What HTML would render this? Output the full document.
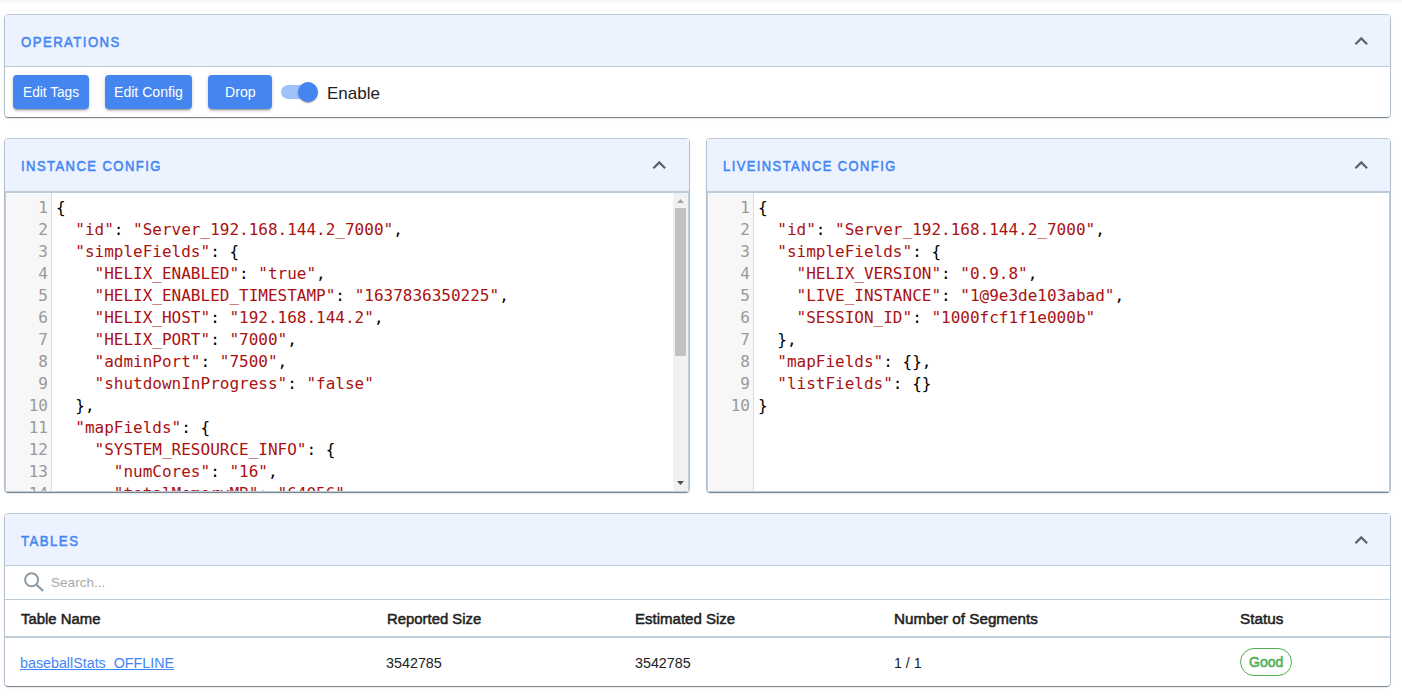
<!DOCTYPE html>
<html lang="en">
<head>
<meta charset="utf-8">
<title>Instance Details</title>
<style>
*{box-sizing:border-box;margin:0;padding:0}
html,body{width:1402px;height:698px;overflow:hidden;background:#fff}
body{position:relative;font-family:"Liberation Sans",sans-serif;color:#212121;font-size:15.5px}
.topshade{position:absolute;left:0;top:0;width:1402px;height:1px;background:#f5f5f5;box-shadow:0 1px 0 #f8f8f8,0 2px 0 #fcfcfc}
.card{position:absolute;border:1px solid #bdccd9;border-radius:4px;background:#fff}
.paper{position:relative;width:100%;height:100%;border-radius:3px;background:#fff;
  box-shadow:0 2px 1px -1px rgba(0,0,0,.2),0 1px 1px 0 rgba(0,0,0,.14),0 1px 3px 0 rgba(0,0,0,.12)}
.hdr{position:relative;background:#ecf3fe;border-bottom:1px solid #bdccd9;height:52px;border-radius:3px 3px 0 0}
.sx{position:absolute;display:inline-block;white-space:nowrap;transform-origin:0 50%;line-height:20px;font-size:15.5px}
.semi{font-weight:400;-webkit-text-stroke:.55px currentColor}
.title{letter-spacing:1.7px;color:#4285f4}
.chev{position:absolute;top:12.9px;width:26.5px;height:26.5px;fill:rgba(0,0,0,.6)}

/* operations */
.ops{position:relative;height:50px}
.btn{position:absolute;top:8px;height:34px;border:0;border-radius:4px;background:#4585ef;color:#fff;
  font:400 15.5px/20px "Liberation Sans",sans-serif;text-align:left;
  box-shadow:0 3px 1px -2px rgba(0,0,0,.2),0 2px 2px 0 rgba(0,0,0,.14),0 1px 5px 0 rgba(0,0,0,.12)}
.switch{position:absolute;left:264px;top:6px;width:58px;height:38px}
.track{position:absolute;left:12px;top:12px;width:34px;height:14px;border-radius:7px;background:#4285f4;opacity:.5}
.thumb{position:absolute;left:29px;top:9px;width:20px;height:20px;border-radius:50%;background:#4585ef;
  box-shadow:0 2px 1px -1px rgba(0,0,0,.2),0 1px 1px 0 rgba(0,0,0,.14),0 1px 3px 0 rgba(0,0,0,.12)}
.ops .swlabel{font-size:17px;color:#212121}

/* code */
.cm{position:relative;height:300px;border:1px solid #bdccd9;background:#fff;overflow:hidden;
  font:16px/22px "DejaVu Sans Mono",monospace;color:#000}
.gutter{position:absolute;left:0;top:0;bottom:0;width:46px;background:#f7f7f7;border-right:1px solid #ddd}
.lines{position:absolute;left:0;top:4px;right:0}
.ln{height:22px;white-space:pre;position:relative;padding-left:50px}
.ln i{position:absolute;left:0;top:0;width:42px;text-align:right;font-style:normal;color:#999}
.s{color:#a11}
.sb{position:absolute;right:0;top:0;bottom:0;width:15px;background:#f1f1f1}
.sb .th{position:absolute;left:2px;width:11px;top:15px;height:148px;background:#c1c1c1}
.sb svg{position:absolute;left:0;width:15px;height:15px}

/* tables */
.search{position:relative;height:34px;border-bottom:1px solid #bdccd9}
.search svg{position:absolute;left:18px;top:4.1px;width:24px;height:24px}
.search .ph{font-size:13.5px;color:#a9a9a9}
.thead{position:relative;height:38px;border-bottom:2px solid #bdccd9}
.thead .sx{color:#1f1f1f}
.trow{position:relative;height:48px}
.trow .sx{color:#212121}
.trow a.sx{color:#4285f4;text-decoration:underline}
.chip{position:absolute;left:1235px;top:10px;width:52px;height:28px;border:1px solid #4caf50;border-radius:14px}
.trow .chip .sx{color:#4caf50;font-size:15px}
</style>
</head>
<body>
<div class="topshade"></div>

<!-- OPERATIONS -->
<div class="card" style="left:4px;top:14px;width:1387px;height:104px"><div class="paper">
  <div class="hdr">
    <span class="sx semi title" style="left:16.34px;top:17px;transform:scaleX(0.8494)">OPERATIONS</span>
    <svg class="chev" style="left:1342.65px" viewBox="0 0 24 24"><path d="M12 8l-6 6 1.41 1.41L12 10.83l4.59 4.58L18 14z"/></svg>
  </div>
  <div class="ops">
    <button class="btn" style="left:8px;width:76px"><span class="sx" style="left:9.70px;top:7px;transform:scaleX(0.8836)">Edit Tags</span></button>
    <button class="btn" style="left:100px;width:87px"><span class="sx" style="left:9.13px;top:7px;transform:scaleX(0.9084)">Edit Config</span></button>
    <button class="btn" style="left:203px;width:64px"><span class="sx" style="left:16.60px;top:7px;transform:scaleX(0.9143)">Drop</span></button>
    <span class="switch" role="switch" aria-checked="true"><span class="track"></span><span class="thumb"></span></span>
    <span class="sx swlabel" style="left:322.29px;top:17px;transform:scaleX(0.9998)">Enable</span>
  </div>
</div></div>

<!-- INSTANCE CONFIG -->
<div class="card" style="left:4px;top:138px;width:686px;height:355px"><div class="paper">
  <div class="hdr" style="height:53px">
    <span class="sx semi title" style="left:15.62px;top:17px;transform:scaleX(0.8417)">INSTANCE CONFIG</span>
    <svg class="chev" style="left:640.7px" viewBox="0 0 24 24"><path d="M12 8l-6 6 1.41 1.41L12 10.83l4.59 4.58L18 14z"/></svg>
  </div>
  <div class="cm">
    <div class="gutter"></div>
    <div class="lines">
<div class="ln"><i>1</i>{</div>
<div class="ln"><i>2</i>  <span class="s">"id"</span>: <span class="s">"Server_192.168.144.2_7000"</span>,</div>
<div class="ln"><i>3</i>  <span class="s">"simpleFields"</span>: {</div>
<div class="ln"><i>4</i>    <span class="s">"HELIX_ENABLED"</span>: <span class="s">"true"</span>,</div>
<div class="ln"><i>5</i>    <span class="s">"HELIX_ENABLED_TIMESTAMP"</span>: <span class="s">"1637836350225"</span>,</div>
<div class="ln"><i>6</i>    <span class="s">"HELIX_HOST"</span>: <span class="s">"192.168.144.2"</span>,</div>
<div class="ln"><i>7</i>    <span class="s">"HELIX_PORT"</span>: <span class="s">"7000"</span>,</div>
<div class="ln"><i>8</i>    <span class="s">"adminPort"</span>: <span class="s">"7500"</span>,</div>
<div class="ln"><i>9</i>    <span class="s">"shutdownInProgress"</span>: <span class="s">"false"</span></div>
<div class="ln"><i>10</i>  },</div>
<div class="ln"><i>11</i>  <span class="s">"mapFields"</span>: {</div>
<div class="ln"><i>12</i>    <span class="s">"SYSTEM_RESOURCE_INFO"</span>: {</div>
<div class="ln"><i>13</i>      <span class="s">"numCores"</span>: <span class="s">"16"</span>,</div>
<div class="ln"><i>14</i>      <span class="s">"totalMemoryMB"</span>: <span class="s">"64056"</span>,</div>
    </div>
    <div class="sb">
      <svg style="top:0" viewBox="0 0 15 15"><path d="M4 10h7L7.5 6z" fill="#a3a3a3"/></svg>
      <div class="th"></div>
      <svg style="bottom:0" viewBox="0 0 15 15"><path d="M4 5h7L7.5 9z" fill="#505050"/></svg>
    </div>
  </div>
</div></div>

<!-- LIVEINSTANCE CONFIG -->
<div class="card" style="left:706px;top:138px;width:685px;height:355px"><div class="paper">
  <div class="hdr" style="height:53px">
    <span class="sx semi title" style="left:15.61px;top:17px;transform:scaleX(0.8362)">LIVEINSTANCE CONFIG</span>
    <svg class="chev" style="left:640.7px" viewBox="0 0 24 24"><path d="M12 8l-6 6 1.41 1.41L12 10.83l4.59 4.58L18 14z"/></svg>
  </div>
  <div class="cm">
    <div class="gutter"></div>
    <div class="lines">
<div class="ln"><i>1</i>{</div>
<div class="ln"><i>2</i>  <span class="s">"id"</span>: <span class="s">"Server_192.168.144.2_7000"</span>,</div>
<div class="ln"><i>3</i>  <span class="s">"simpleFields"</span>: {</div>
<div class="ln"><i>4</i>    <span class="s">"HELIX_VERSION"</span>: <span class="s">"0.9.8"</span>,</div>
<div class="ln"><i>5</i>    <span class="s">"LIVE_INSTANCE"</span>: <span class="s">"1@9e3de103abad"</span>,</div>
<div class="ln"><i>6</i>    <span class="s">"SESSION_ID"</span>: <span class="s">"1000fcf1f1e000b"</span></div>
<div class="ln"><i>7</i>  },</div>
<div class="ln"><i>8</i>  <span class="s">"mapFields"</span>: {},</div>
<div class="ln"><i>9</i>  <span class="s">"listFields"</span>: {}</div>
<div class="ln"><i>10</i>}</div>
    </div>
  </div>
</div></div>

<!-- TABLES -->
<div class="card" style="left:4px;top:513px;width:1387px;height:174px"><div class="paper">
  <div class="hdr">
    <span class="sx semi title" style="left:15.69px;top:17px;transform:scaleX(0.8525)">TABLES</span>
    <svg class="chev" style="left:1342.65px" viewBox="0 0 24 24"><path d="M12 8l-6 6 1.41 1.41L12 10.83l4.59 4.58L18 14z"/></svg>
  </div>
  <div class="search">
    <svg viewBox="0 0 24 24"><circle cx="8.6" cy="9.8" r="6.5" fill="none" stroke="#8d9ba8" stroke-width="2"/><path d="M13.3 14.5l6.9 6.5" stroke="#8d9ba8" stroke-width="2.4" fill="none"/></svg>
    <span class="sx ph" style="left:46.01px;top:7px;transform:scaleX(1.0064)">Search...</span>
  </div>
  <div role="table" aria-label="Tables">
  <div class="thead" role="row">
    <span role="columnheader" class="sx semi" style="left:16.37px;top:9px;transform:scaleX(0.9601)">Table Name</span>
    <span role="columnheader" class="sx semi" style="left:381.55px;top:9px;transform:scaleX(0.9593)">Reported Size</span>
    <span role="columnheader" class="sx semi" style="left:629.82px;top:9px;transform:scaleX(0.9694)">Estimated Size</span>
    <span role="columnheader" class="sx semi" style="left:889.48px;top:9px;transform:scaleX(0.9820)">Number of Segments</span>
    <span role="columnheader" class="sx semi" style="left:1235.44px;top:9px;transform:scaleX(0.9866)">Status</span>
  </div>
  <div class="trow" role="row">
    <a role="cell" class="sx" style="left:15.16px;top:15px;transform:scaleX(0.9214)">baseballStats<span style="position:relative;top:-1px">_</span>OFFLINE</a>
    <span role="cell" class="sx" style="left:381.01px;top:15px;transform:scaleX(0.9249)">3542785</span>
    <span role="cell" class="sx" style="left:629.72px;top:15px;transform:scaleX(0.9222)">3542785</span>
    <span role="cell" class="sx" style="left:889.44px;top:15px;transform:scaleX(0.9131)">1 / 1</span>
    <span role="cell" class="chip"><span class="sx semi" style="left:8.19px;top:3px;transform:scaleX(0.9351)">Good</span></span>
  </div>
  </div>
</div></div>
</body>
</html>
